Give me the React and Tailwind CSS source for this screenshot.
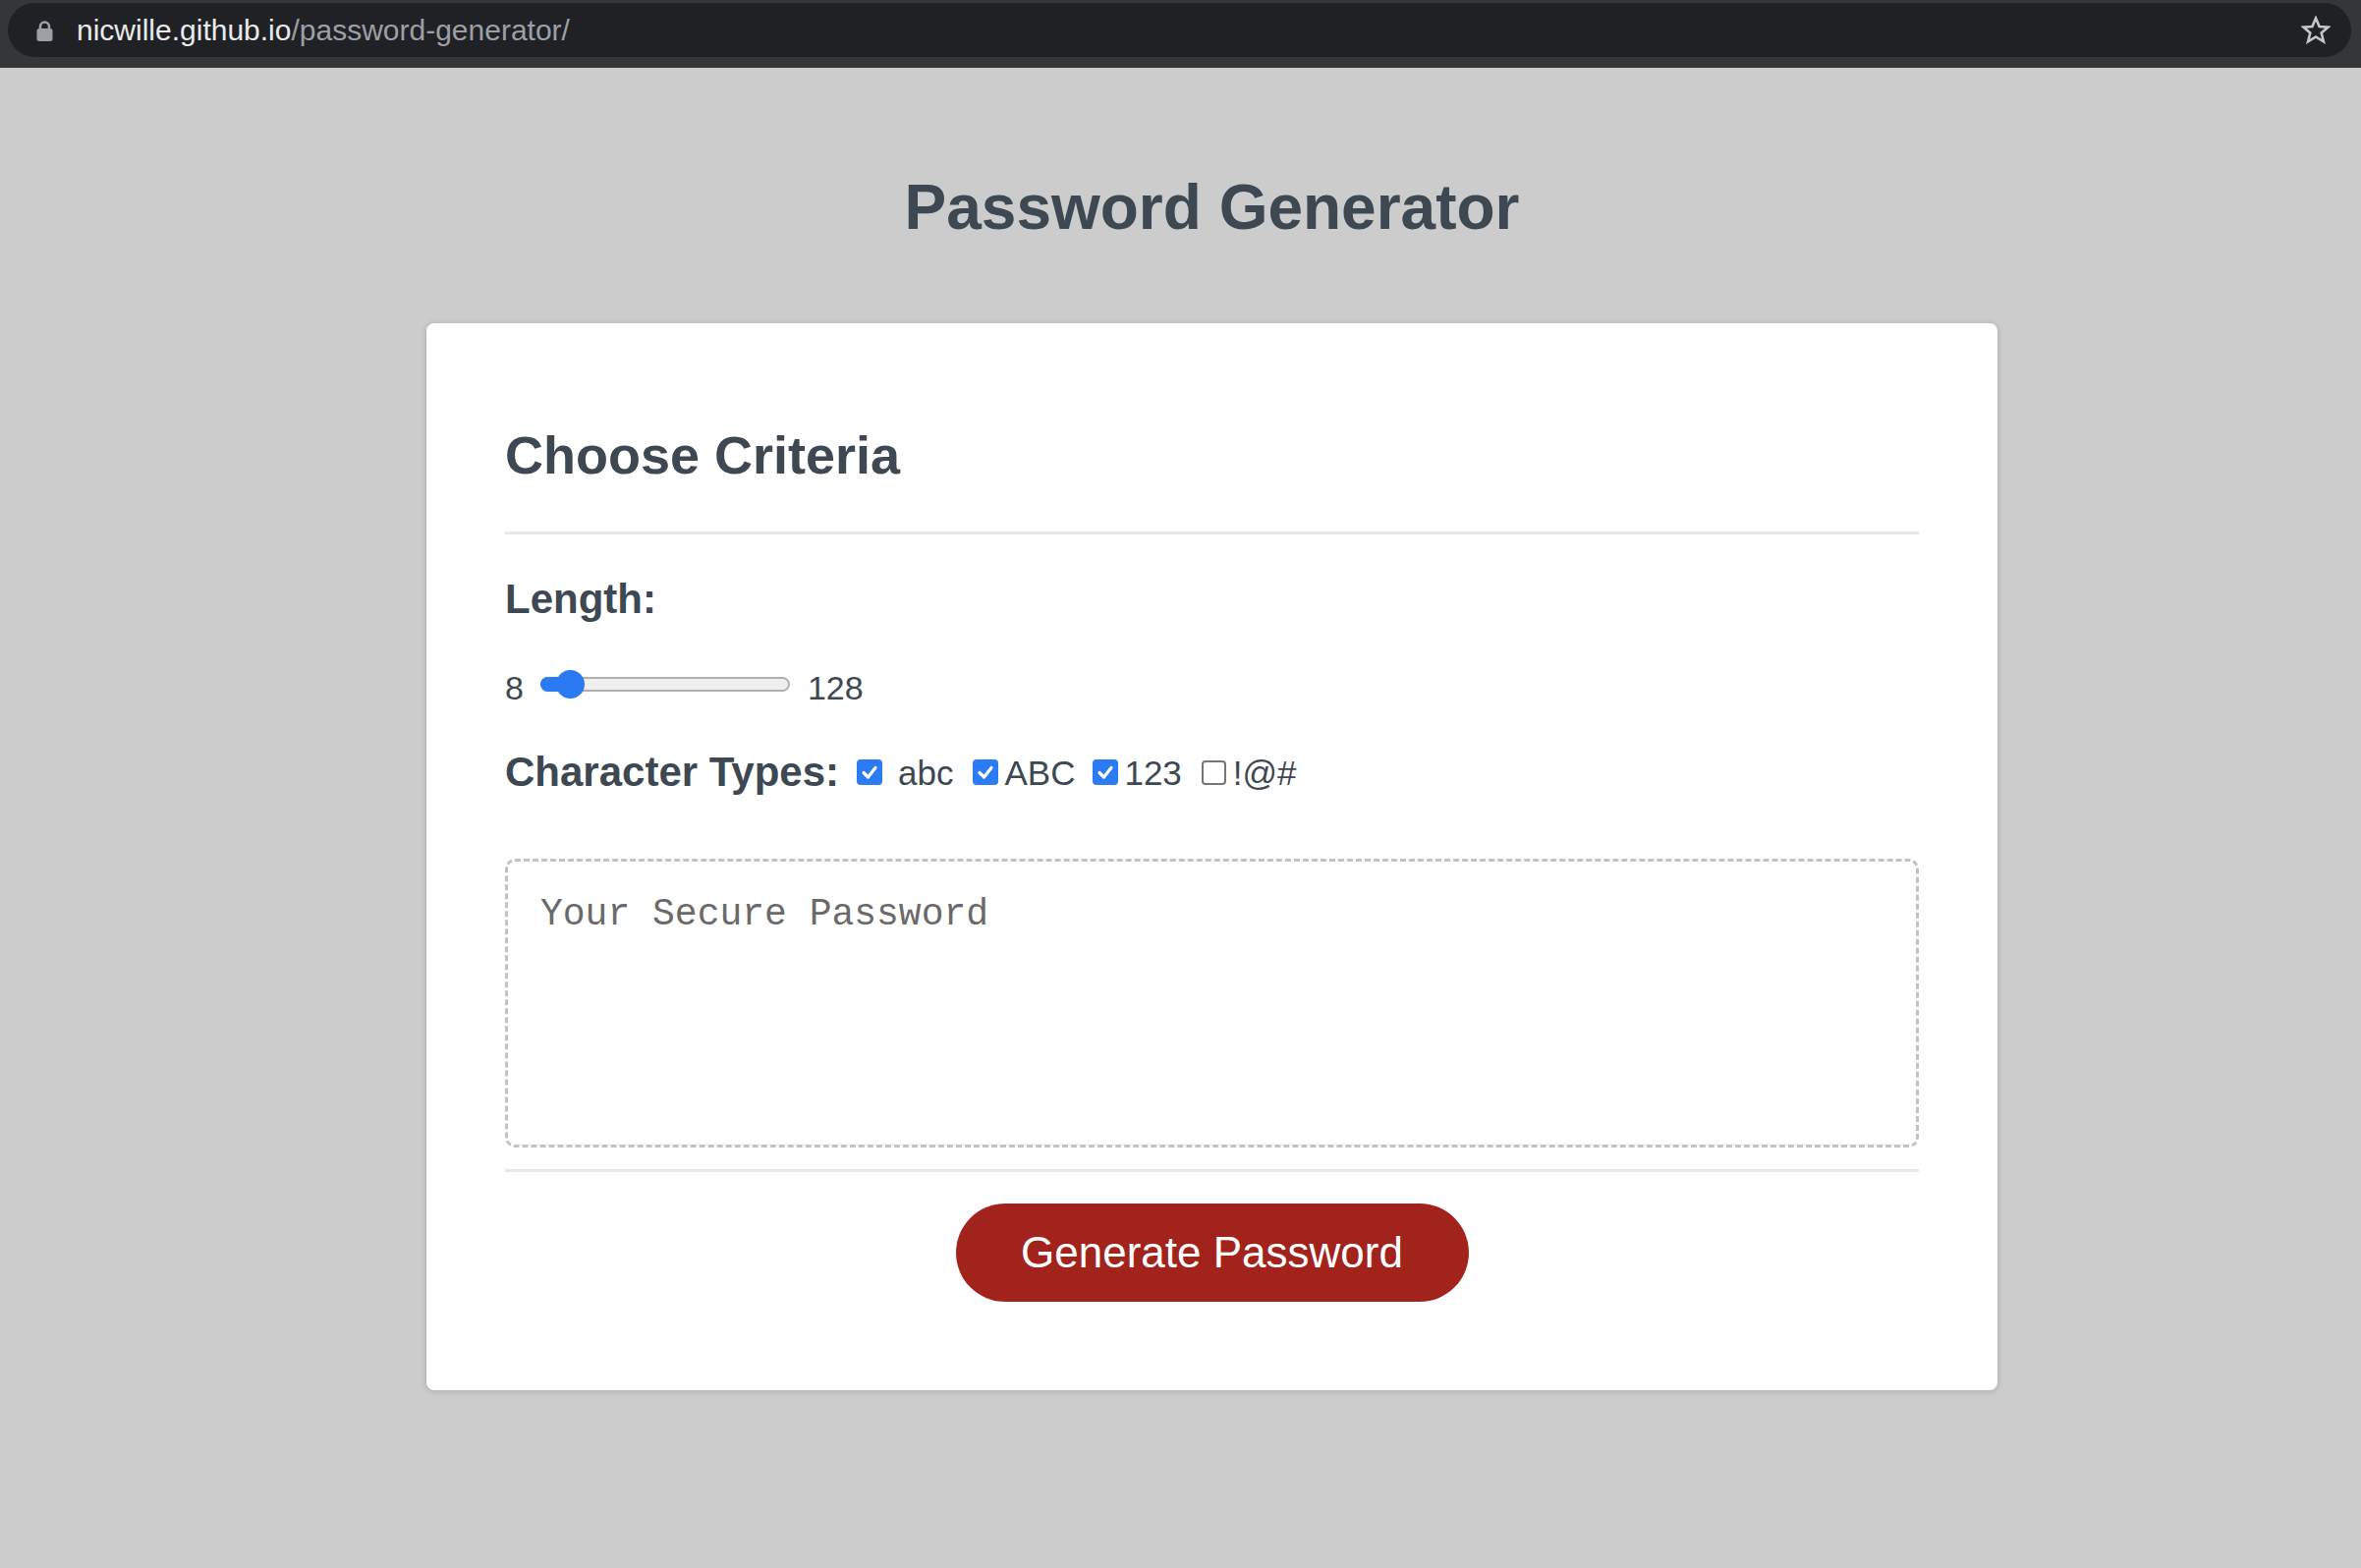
import React from "react";

const CheckBox = ({ checked }) =>
  checked ? (
    <span className="flex h-[26px] w-[26px] shrink-0 items-center justify-center rounded-[4px] bg-[#2b7bf5]">
      <svg width="20" height="20" viewBox="0 0 20 20">
        <polyline
          points="4,10.5 8.5,15 16,5.5"
          fill="none"
          stroke="#fff"
          strokeWidth="3.2"
          strokeLinecap="round"
          strokeLinejoin="round"
        />
      </svg>
    </span>
  ) : (
    <span className="block h-[25px] w-[25px] shrink-0 rounded-[4px] border-2 border-[#767676] bg-white" />
  );

const App = () => {
  return (
    <div className="min-h-screen bg-[#cccccc] font-['Liberation_Sans',Arial,sans-serif]">
      {/* browser bar */}
      <div className="h-[69px] bg-[#35363a] pl-[8px] pr-[10px] pt-[3px]">
        <div className="flex h-[55px] items-center rounded-full bg-[#202124] pl-[29px] pr-[21px]">
          <svg width="17" height="22" viewBox="0 0 17 22" className="shrink-0">
            <path
              d="M4 10V7a4.5 4.5 0 0 1 9 0v3"
              fill="none"
              stroke="#9aa0a6"
              strokeWidth="2.6"
            />
            <rect x="0.5" y="9" width="16" height="13" rx="2.5" fill="#9aa0a6" />
          </svg>
          <div className="ml-[24px] text-[30px] leading-none">
            <span className="text-[#e8eaed]">nicwille.github.io</span>
            <span className="text-[#9aa0a6]">/password-generator/</span>
          </div>
          <svg width="30" height="29" viewBox="0 0 30 29" className="ml-auto shrink-0">
            <polygon
              points="15,2.5 18.6,11 27.6,11.6 20.7,17.5 22.9,26.3 15,21.5 7.1,26.3 9.3,17.5 2.4,11.6 11.4,11"
              fill="none"
              stroke="#c4c7c5"
              strokeWidth="2.6"
              strokeLinejoin="miter"
            />
          </svg>
        </div>
      </div>

      {/* page */}
      <div className="flex flex-col items-center pl-[64px] pt-[110px] pb-[180px] text-[#3d4852]">
        <h1 className="text-[64px] font-bold leading-none">Password Generator</h1>

        <div className="mt-[86px] w-[1599px] rounded-[8px] bg-white px-[80px] pt-[107px] pb-[90px] shadow-[0_1px_6px_rgba(0,0,0,0.18)]">
          <h2 className="text-[54px] font-bold leading-none">Choose Criteria</h2>
          <div className="mt-[51px] h-[3px] bg-[#e8e8e8]" />

          <div className="mt-[45px] text-[42px] font-bold leading-none">Length:</div>

          <div className="mt-[52px] flex h-[34px] items-center text-[34px] leading-none">
            <span>8</span>
            <div className="relative ml-[17px] mb-[8px] h-[15px] w-[254px] rounded-full border-2 border-[#b0b0b0] bg-[#efefef]">
              <div className="absolute left-[-2px] top-[-2px] h-[15px] w-[34px] rounded-l-full bg-[#2a7af3]" />
              <div className="absolute left-[14px] top-[-9px] h-[29px] w-[29px] rounded-full bg-[#2a7af3]" />
            </div>
            <span className="ml-[18px]">128</span>
          </div>

          <div className="mt-[48px] flex h-[42px] items-center">
            <span className="text-[42px] font-bold leading-none">Character Types:</span>
            <span className="ml-[18px]">
              <CheckBox checked />
            </span>
            <span className="ml-[16px] text-[35px] leading-none">abc</span>
            <span className="ml-[20px]">
              <CheckBox checked />
            </span>
            <span className="ml-[6px] text-[35px] leading-none">ABC</span>
            <span className="ml-[18px]">
              <CheckBox checked />
            </span>
            <span className="ml-[6px] text-[35px] leading-none">123</span>
            <span className="ml-[20px]">
              <CheckBox />
            </span>
            <span className="ml-[7px] text-[35px] leading-none">!@#</span>
          </div>

          <textarea
            readOnly
            placeholder="Your Secure Password"
            className="mt-[67px] block h-[294px] w-full resize-none rounded-[10px] border-[3px] border-dashed border-[#bfc3c9] pt-[35px] pl-[33px] font-['Liberation_Mono',monospace] text-[38px] leading-none text-[#333] outline-none placeholder:text-[#6a6a6a]"
          />

          <div className="mt-[22px] h-[3px] bg-[#e8e8e8]" />

          <div className="mt-[32px] flex justify-center">
            <button className="h-[100px] w-[522px] rounded-full bg-[#a1231c] text-[44px] leading-none text-white">
              Generate Password
            </button>
          </div>
        </div>
      </div>
    </div>
  );
};

export default App;
